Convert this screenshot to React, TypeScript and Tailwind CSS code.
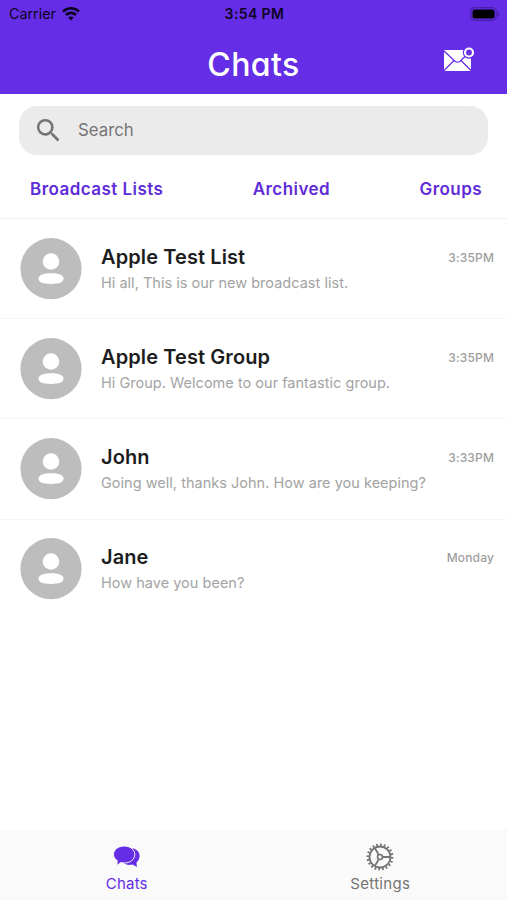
import { MdSearch } from 'react-icons/md'

const chats = [
  { name: 'Apple Test List', message: 'Hi all, This is our new broadcast list.', time: '3:35PM' },
  { name: 'Apple Test Group', message: 'Hi Group. Welcome to our fantastic group.', time: '3:35PM' },
  { name: 'John', message: 'Going well, thanks John. How are you keeping?', time: '3:33PM' },
  { name: 'Jane', message: 'How have you been?', time: 'Monday' },
]

function WifiIcon() {
  return (
    <svg width="18" height="14" viewBox="0 0 18 14" fill="none" stroke="#0d0424" strokeWidth="2.6">
      <path d="M1 4.6 C5.4 0.2 12.6 0.2 17 4.6" />
      <path d="M4 8 C6.8 5.2 11.2 5.2 14 8" />
      <path d="M9 13.4 L6.1 10.5 C7.7 9 10.3 9 11.9 10.5 Z" fill="#0d0424" stroke="none" />
    </svg>
  )
}

function BatteryIcon() {
  return (
    <svg width="30" height="14" viewBox="0 0 30 14">
      <rect x="0.7" y="0.7" width="25.6" height="12.6" rx="4" fill="none" stroke="#451fa8" strokeWidth="1.2" />
      <rect x="2.5" y="2.5" width="22" height="9" rx="2.2" fill="#000" />
      <path d="M27.8 4.6 C30 5.4 30 8.6 27.8 9.4 Z" fill="#451fa8" />
    </svg>
  )
}

function MailIcon() {
  return (
    <svg width="32" height="26" viewBox="0 0 32 26">
      <rect x="1" y="3" width="27" height="21" rx="1" fill="#fff" />
      <path d="M1 4 L12 14.2 Q14.5 16.2 17 14.2 L28 4 M1 23.5 L11 13.5 M18 13.5 L28 23.5" fill="none" stroke="#652ee6" strokeWidth="1.3" />
      <circle cx="26" cy="5.5" r="6.2" fill="#652ee6" />
      <circle cx="26" cy="5.5" r="4" fill="none" stroke="#fff" strokeWidth="2.2" />
    </svg>
  )
}

function Avatar() {
  return (
    <svg className="shrink-0" width="62" height="62" viewBox="0 0 62 62">
      <circle cx="31" cy="30.7" r="30.6" fill="#bdbdbd" />
      <circle cx="31" cy="23.5" r="8.3" fill="#fff" />
      <path d="M18.5 40.6 C18.5 36.8 24 35.2 31 35.2 C38 35.2 43.5 36.8 43.5 40.6 C43.5 44.4 39 46 31 46 C23 46 18.5 44.4 18.5 40.6 Z" fill="#fff" />
    </svg>
  )
}

function BubblesIcon() {
  return (
    <svg width="28" height="32" viewBox="0 0 28 32" fill="currentColor">
      <path d="M19.6 7.2 C24.2 8.3 26.8 11.4 26.6 15.2 C26.5 17.8 25.3 20 23.4 21.5 L24 26 L19.4 23.6 C15.8 24.4 12.4 23.8 10.2 21.8 Z" />
      <path
        d="M11.2 5 C17.3 5 21.8 8.8 21.8 13.5 C21.8 18.4 17.2 22 11.4 22 C10.2 22 9.1 21.8 8.1 21.5 L3.9 24.4 L4.2 19.6 C1.8 18 0.5 16 0.5 13.5 C0.5 8.8 5.2 5 11.2 5 Z"
        stroke="#fafafa"
        strokeWidth="1"
      />
    </svg>
  )
}

function GearIcon() {
  return (
    <svg width="32" height="32" viewBox="-16 -16 32 32" fill="none" stroke="currentColor">
      <circle r="10.5" strokeWidth="1.8" />
      {/* pathLength splits the ring into 20 teeth */}
      <circle r="12.3" strokeWidth="2.4" pathLength="40" strokeDasharray="0.9 1.1" />
      <circle r="2.5" strokeWidth="1.6" />
      <path d="M2.5 0 H10.5 M-1.25 -2.2 L-5.25 -9.1 M-1.25 2.2 L-5.25 9.1" strokeWidth="1.8" />
    </svg>
  )
}

export default function App() {
  return (
    <div className="flex h-[900px] w-[507px] flex-col overflow-hidden bg-white font-['Inter',sans-serif]">
      <header className="h-[94px] bg-[#652ee6]">
        <div className="grid h-[27px] grid-cols-3 items-center pr-[7px] pl-[9px] text-[#0d0424]">
          <div className="flex items-center gap-[6px]">
            <span className="text-[14.3px]">Carrier</span>
            <WifiIcon />
          </div>
          <span className="text-center text-[14px] font-semibold tracking-[0.4px]">3:54 PM</span>
          <div className="flex justify-end">
            <BatteryIcon />
          </div>
        </div>
        <div className="grid h-[67px] grid-cols-3 items-center pt-2 pr-8">
          <h1 className="col-start-2 pl-8 text-center text-[32px] font-medium tracking-[0.4px] text-white [font-feature-settings:'cv11']">Chats</h1>
          <div className="flex justify-end pb-[10px]">
            <MailIcon />
          </div>
        </div>
      </header>

      <div className="mx-[19px] mt-3 flex h-[49px] shrink-0 items-center rounded-[18px] bg-[#ebebeb] pl-[14px] text-[#757575]">
        <MdSearch size={31} />
        <span className="ml-[14px] text-[16.8px]">Search</span>
      </div>

      <nav className="flex h-[64px] items-center justify-between border-b border-[#f1f1f1] pt-[6px] pr-[25px] pl-[30px] text-[17px] font-semibold tracking-[0.45px] text-[#5f2cd8]">
        <span>Broadcast Lists</span>
        <span>Archived</span>
        <span>Groups</span>
      </nav>

      <ul className="grow">
        {chats.map((chat) => (
          <li key={chat.name} className="flex h-[100.2px] items-center border-b border-[#f7f7f7] pr-[13px] pl-5 last:border-b-0 last:pb-px">
            <Avatar />
            <div className="ml-[19px] grow pt-[2px]">
              <div className="flex items-center justify-between">
                <span className="text-[20px] leading-[26px] font-semibold tracking-[0.1px] text-[#1d1d1d]">{chat.name}</span>
                <span className="pt-[2px] text-[12px] font-medium tracking-[0.15px] text-[#9e9e9e]">{chat.time}</span>
              </div>
              <p className="text-[14.5px] leading-[26px] tracking-[0.02px] text-[#a3a3a3]">{chat.message}</p>
            </div>
          </li>
        ))}
      </ul>

      <footer className="grid h-[70px] shrink-0 grid-cols-2 border-t border-[#f7f7f7] bg-[#fafafa] text-[15px]">
        <div className="flex flex-col items-center pt-[10px] text-[#652ee6]">
          <BubblesIcon />
          <span className="tracking-[0.2px]">Chats</span>
        </div>
        <div className="flex flex-col items-center pt-[10px] text-[#757575]">
          <GearIcon />
          <span className="tracking-[0.3px]">Settings</span>
        </div>
      </footer>
    </div>
  )
}
